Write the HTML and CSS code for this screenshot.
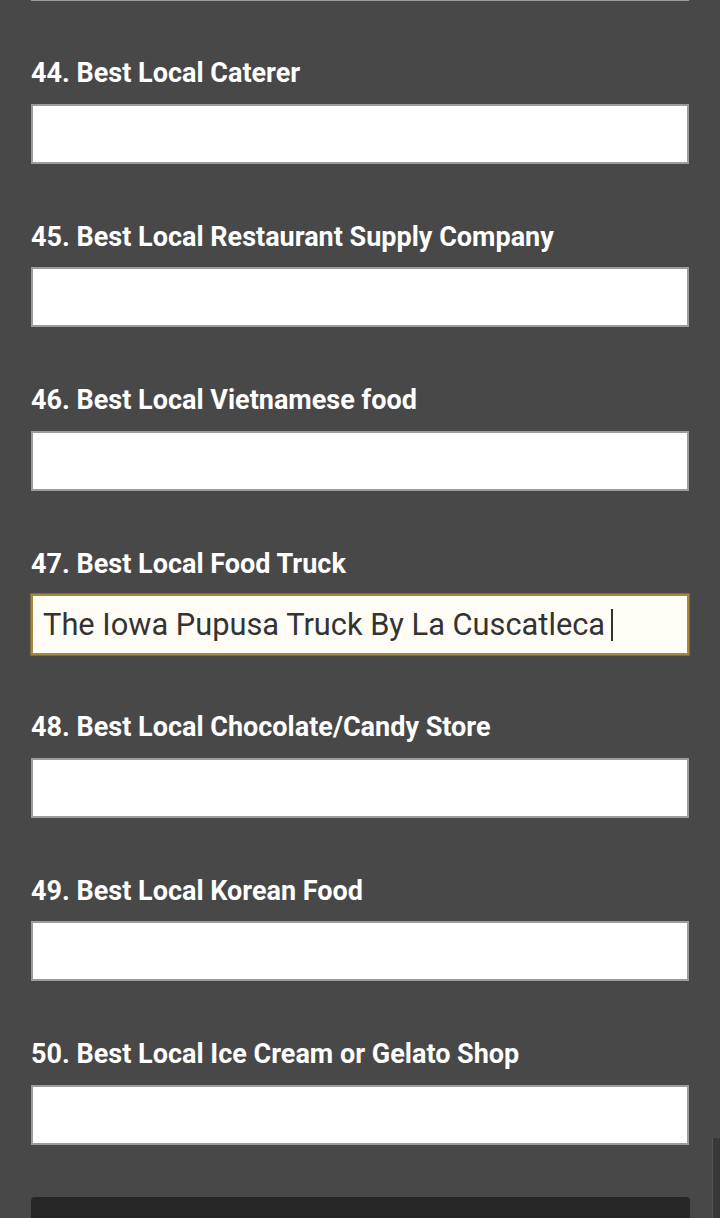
FILE: index.html
```html
<!DOCTYPE html>
<html lang="en">
<head>
    <meta charset="UTF-8">
    <meta name="viewport" content="width=device-width, initial-scale=1.0">
    <title>Best Of Survey</title>
    <link rel="stylesheet" href="styles.css">
</head>
<body>
    <form class="survey" action="#" method="POST">
        <input type="text" class="answer answer-prev" name="q43">

        <div class="field">
            <label for="q44">44. Best Local Caterer</label>
            <input type="text" class="answer" id="q44" name="q44">
        </div>
        <div class="field">
            <label for="q45">45. Best Local Restaurant Supply Company</label>
            <input type="text" class="answer" id="q45" name="q45">
        </div>
        <div class="field">
            <label for="q46">46. Best Local Vietnamese food</label>
            <input type="text" class="answer" id="q46" name="q46">
        </div>
        <div class="field">
            <label for="q47">47. Best Local Food Truck</label>
            <div class="answer answer-focus" id="q47">The Iowa Pupusa Truck By La Cuscatleca<span class="caret"></span></div>
        </div>
        <div class="field">
            <label for="q48">48. Best Local Chocolate/Candy Store</label>
            <input type="text" class="answer" id="q48" name="q48">
        </div>
        <div class="field">
            <label for="q49">49. Best Local Korean Food</label>
            <input type="text" class="answer" id="q49" name="q49">
        </div>
        <div class="field">
            <label for="q50">50. Best Local Ice Cream or Gelato Shop</label>
            <input type="text" class="answer" id="q50" name="q50">
        </div>

        <button type="submit" class="submit-btn" aria-label="Submit"></button>
    </form>
    <div class="scrollbar"></div>
</body>
</html>
```

FILE: styles.css
```css
body {
    margin: 0;
    background-color: #484848;
    font-family: Roboto, "Liberation Sans", sans-serif;
    overflow: hidden;
}

.survey {
    display: flex;
    flex-direction: column;
    padding: 0 31px 0 31px;
}

.field {
    display: flex;
    flex-direction: column;
    margin-top: 57px;
}

.field + .field {
    margin-top: 58px;
}

.field label {
    color: #fff;
    font-weight: 700;
    font-size: 27px;
    line-height: 30px;
    margin-bottom: 15.5px;
}

.answer {
    display: block;
    box-sizing: border-box;
    width: 100%;
    height: 60px;
    margin: 0;
    padding: 0 10px;
    background-color: #fff;
    border: 2px solid #9c9c9c;
    border-radius: 0;
    font-family: Roboto, "Liberation Sans", sans-serif;
    font-size: 30.8px;
    color: #333;
    outline: none;
}

.survey .answer-prev {
    margin-top: -59px;
}

.answer-focus {
    display: flex;
    align-items: center;
    border-color: #a8873f;
    background-color: #fffdf6;
    height: 61px;
    margin-bottom: -1px;
    box-shadow: 0 0 0 1px #7a6a48;
}

.caret {
    display: inline-block;
    width: 2px;
    height: 32px;
    margin-left: 6px;
    background-color: #333;
}

.submit-btn {
    margin-top: 52.5px;
    height: 60px;
    width: calc(100% + 1px);
    background-color: #262626;
    border: none;
    border-radius: 4px;
}

.scrollbar {
    position: fixed;
    right: 0;
    top: 1138px;
    width: 7px;
    height: 80px;
    background-color: #383838;
    border-left: 1px solid #555;
}
```
